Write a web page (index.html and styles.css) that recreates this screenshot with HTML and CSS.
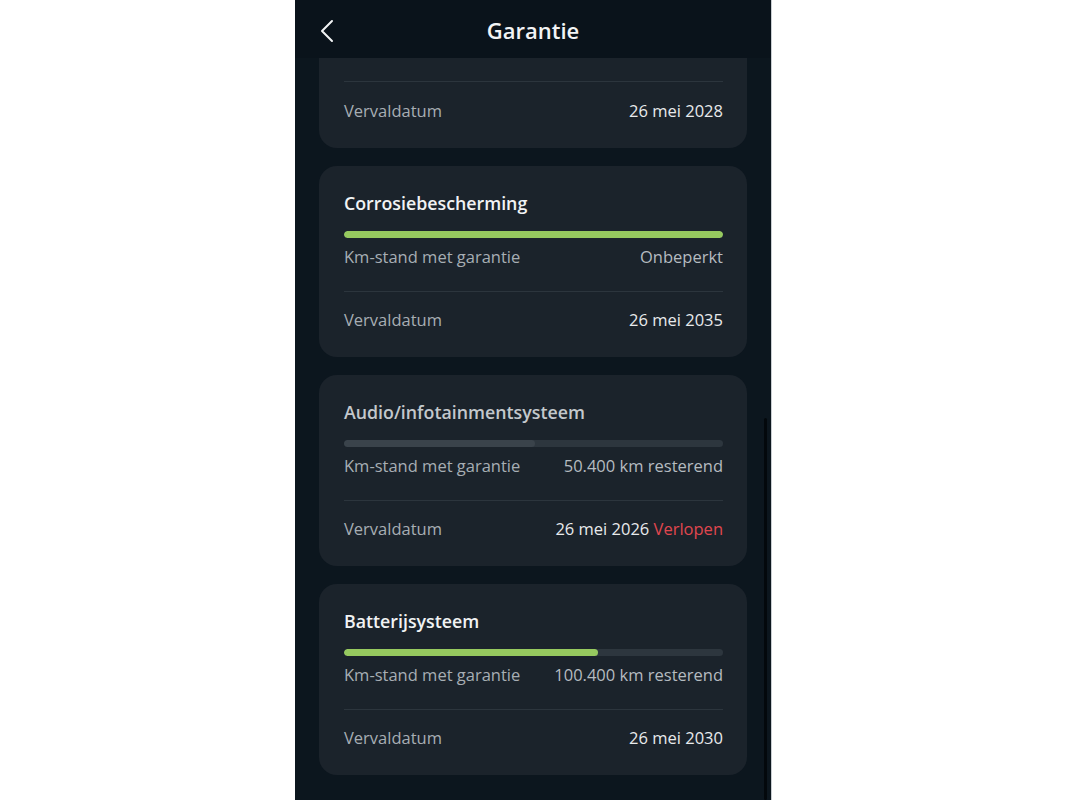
FILE: index.html
```html
<!DOCTYPE html>
<html lang="nl">
<head>
<meta charset="utf-8">
<title>Garantie</title>
<link rel="stylesheet" href="styles.css">
</head>
<body>
<div class="phone">
  <header class="topbar">
    <button class="back" aria-label="Terug">
      <svg width="14" height="24" viewBox="0 0 14 24"><path d="M12 2 L2 12 L12 22" fill="none" stroke="#f2f4f5" stroke-width="2" stroke-linecap="round" stroke-linejoin="round"/></svg>
    </button>
    <h1 class="title">Garantie</h1>
  </header>
  <main class="viewport">
    <div class="list">
      <section class="card scrolled">
        <div class="row ruled"><span class="label">Vervaldatum</span><span class="value">26 mei 2028</span></div>
      </section>
      <section class="card">
        <h2 class="card-title">Corrosiebescherming</h2>
        <div class="bar"><div class="fill green" style="width:100%"></div></div>
        <div class="row first"><span class="label">Km-stand met garantie</span><span class="value muted">Onbeperkt</span></div>
        <div class="row"><span class="label">Vervaldatum</span><span class="value">26 mei 2035</span></div>
      </section>
      <section class="card expired">
        <h2 class="card-title">Audio/infotainmentsysteem</h2>
        <div class="bar"><div class="fill grey" style="width:50.4%"></div></div>
        <div class="row first"><span class="label">Km-stand met garantie</span><span class="value muted">50.400 km resterend</span></div>
        <div class="row"><span class="label">Vervaldatum</span><span class="value">26 mei 2026 <span class="alert">Verlopen</span></span></div>
      </section>
      <section class="card">
        <h2 class="card-title">Batterijsysteem</h2>
        <div class="bar"><div class="fill green" style="width:67%"></div></div>
        <div class="row first"><span class="label">Km-stand met garantie</span><span class="value muted">100.400 km resterend</span></div>
        <div class="row"><span class="label">Vervaldatum</span><span class="value">26 mei 2030</span></div>
      </section>
    </div>
    <div class="scrollbar"></div>
  </main>
</div>
</body>
</html>
```
FILE: styles.css
```css
* { box-sizing: border-box; }

html, body {
  margin: 0;
  height: 100%;
  background: #ffffff;
}

body {
  display: flex;
  justify-content: center;
  font-family: "Open Sans", "Noto Sans", sans-serif;
}

.phone {
  width: 477px;
  height: 800px;
  background: #0c161e;
  border-right: 1px solid #c9ced2;
  display: flex;
  flex-direction: column;
  overflow: hidden;
}

.topbar {
  height: 58px;
  flex: none;
  background: #0a131b;
  display: flex;
  align-items: center;
  justify-content: center;
  position: relative;
}

.back {
  position: absolute;
  left: 25px;
  top: 19px;
  padding: 0;
  border: 0;
  background: none;
  display: flex;
}

.title {
  margin: 0;
  color: #f2f4f5;
  font-size: 22px;
  font-weight: 600;
  line-height: 28px;
  padding-top: 2px;
}

.viewport {
  flex: 1;
  overflow: hidden;
  position: relative;
  padding: 0 24px;
}

.list {
  display: flex;
  flex-direction: column;
  gap: 18px;
}

.card {
  background: #1b232b;
  border-radius: 18px;
  padding: 25px 24px 25px 25px;
}

/* first card is partly scrolled under the top bar */
.card.scrolled {
  border-radius: 0 0 18px 18px;
  padding-top: 23px;
  padding-bottom: 25px;
}

.card.scrolled .row {
  padding-top: 17px;
}

.card-title {
  margin: 0;
  font-size: 17.8px;
  font-weight: 600;
  line-height: 24px;
  color: #f1f3f4;
}

.expired .card-title {
  color: #c3c8cc;
}

.bar {
  margin-top: 16px;
  height: 7px;
  border-radius: 4px;
  background: #2d363e;
  overflow: hidden;
}

.fill {
  height: 100%;
  border-radius: 4px;
}

.fill.green { background: #96c95f; }
.fill.grey { background: #3a434b; }

.row {
  display: flex;
  justify-content: space-between;
  align-items: center;
  font-size: 16.5px;
  line-height: 24px;
  padding-top: 16px;
}

.row.ruled {
  border-top: 1px solid #2c353d;
}

.row.first {
  padding-top: 7px;
  padding-bottom: 22px;
  border-bottom: 1px solid #2c353d;
}

.label {
  color: #a7aeb4;
}

.value {
  color: #e8eaec;
}

.value.muted {
  color: #b5bbc0;
}

.alert {
  color: #e0474f;
}

.scrollbar {
  position: absolute;
  right: 4px;
  top: 360px;
  bottom: 0;
  width: 3px;
  background: #03080c;
  border-radius: 2px;
}
```
